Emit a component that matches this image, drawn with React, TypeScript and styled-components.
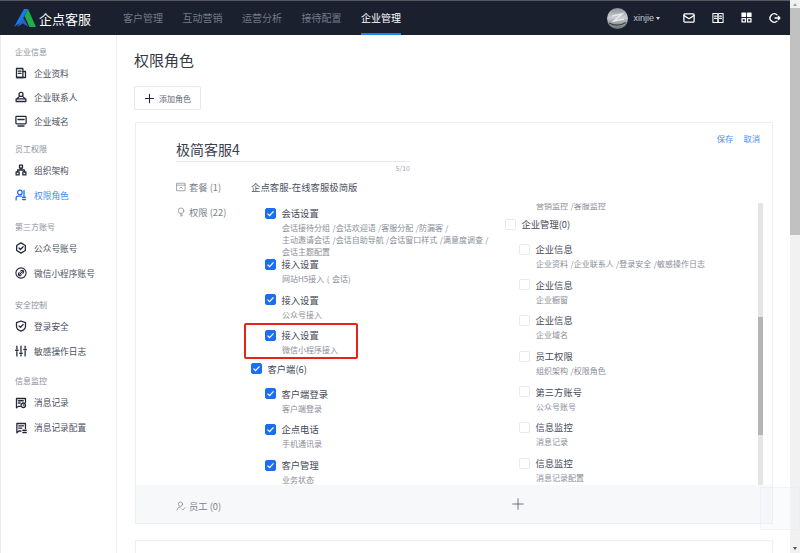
import React from "react";
import styled, { createGlobalStyle } from "styled-components";

const GlobalStyle = createGlobalStyle`
  html, body {
    margin: 0;
    padding: 0;
    height: 100%;
    overflow: hidden;
    background: #fff;
  }
  * {
    box-sizing: border-box;
  }
`;

const FONT = `"Noto Sans CJK SC", "Liberation Sans", sans-serif`;
const BLUE = "#1a6ef0";

const Page = styled.div`
  position: relative;
  width: 800px;
  height: 553px;
  overflow: hidden;
  font-family: ${FONT};
  color: #333a47;
  display: flex;
  flex-direction: column;
`;

const Header = styled.header`
  height: 35px;
  flex: none;
  background: #1a202e;
  border-top: 1px solid #55585f;
  margin-right: 10px;
  display: flex;
  align-items: center;
`;

const Brand = styled.div`
  width: 123px;
  padding-left: 14px;
  display: flex;
  align-items: center;
  gap: 3px;
  color: #fff;
  font-size: 13px;
  flex: none;
`;

const Nav = styled.nav`
  display: flex;
  gap: 19.5px;
  height: 100%;
`;

const NavItem = styled.a<{ $active?: boolean }>`
  width: 40px;
  font-size: 10px;
  line-height: 33px;
  white-space: nowrap;
  color: ${(p) => (p.$active ? "#fff" : "#737a88")};
  border-bottom: 2px solid ${(p) => (p.$active ? "#1f7ff0" : "transparent")};
`;

const HeaderRight = styled.div`
  margin-left: auto;
  display: flex;
  align-items: center;
  color: #fff;
`;

const User = styled.div`
  display: flex;
  align-items: center;
  gap: 5px;
  font-family: "Liberation Sans", sans-serif;
  font-size: 9px;
  color: #c3c7d0;
  margin-right: 23px;
`;

const Caret = styled.span`
  display: inline-block;
  margin-left: 2px;
  border: 2.5px solid transparent;
  border-top: 3px solid #d5d8de;
  border-bottom: 0;
  vertical-align: 1px;
`;

const HeaderIcons = styled.div`
  display: flex;
  gap: 17px;
  margin-right: 9px;
`;

const Body = styled.div`
  flex: 1;
  min-height: 0;
  display: flex;
`;

const Sidebar = styled.aside`
  width: 117px;
  flex: none;
  border-left: 1px solid #e9ebf0;
  border-right: 1px solid #eceef2;
  padding-top: 11px;
`;

const SideGroup = styled.div<{ $gap: number; $pitch: number }>`
  margin-bottom: ${(p) => p.$gap}px;
  a {
    height: ${(p) => p.$pitch}px;
  }
`;

const GroupTitle = styled.div`
  font-size: 8px;
  line-height: 11px;
  color: #8b909a;
  padding-left: 14px;
  margin-bottom: 4px;
`;

const SideItem = styled.a<{ $active?: boolean }>`
  display: flex;
  align-items: center;
  gap: 7px;
  padding-left: 14px;
  font-size: 8.7px;
  white-space: nowrap;
  color: ${(p) => (p.$active ? "#3f8cf3" : "#4b5160")};
  svg {
    color: ${(p) => (p.$active ? BLUE : "#23283a")};
    flex: none;
  }
`;

const Main = styled.main`
  flex: 1;
  min-width: 0;
  padding: 15px 17px 0 17px;
  overflow: hidden;
`;

const PageTitle = styled.h1`
  margin: 0;
  font-weight: 400;
  font-size: 15px;
  line-height: 20px;
  color: #343a46;
`;

const AddButton = styled.button`
  margin-top: 16px;
  width: 67px;
  height: 24px;
  border: 1px solid #e6e8ee;
  border-radius: 2px;
  background: #fff;
  display: flex;
  align-items: center;
  gap: 4px;
  padding: 0 0 0 9px;
  font-family: ${FONT};
  font-size: 8px;
  color: #5c6270;
  svg {
    color: #23283a;
  }
`;

const Card = styled.section`
  margin-top: 12px;
  width: 638px;
  height: 402px;
  margin-left: 1px;
  border: 1px solid #eceef2;
  position: relative;
  display: flex;
  flex-direction: column;
`;

const CardActions = styled.div`
  position: absolute;
  top: 9px;
  right: 12px;
  display: flex;
  gap: 10px;
  font-size: 8.3px;
  color: #4b8ff2;
`;

const NameBlock = styled.div`
  margin: 15px 0 0 40px;
  width: 234px;
`;

const NameInput = styled.div`
  font-size: 14px;
  line-height: 22px;
  height: 24px;
  border-bottom: 1px solid #e4e6f0;
  color: #3a404c;
`;

const Counter = styled.div`
  margin-top: 1px;
  font-size: 7px;
  line-height: 10px;
  text-align: right;
  color: #a3a7b0;
`;

const InfoRow = styled.div`
  display: flex;
  align-items: center;
  height: 16px;
  margin: 6px 0 0 40px;
`;

const InfoLabel = styled.div`
  width: 75px;
  flex: none;
  display: flex;
  align-items: center;
  gap: 3px;
  font-size: 9.3px;
  color: #7d828d;
`;

const InfoValue = styled.div`
  font-size: 9.4px;
  color: #4b5160;
`;

const PermBlock = styled.div`
  flex: 1;
  min-height: 0;
  display: flex;
  margin-top: 8px;
  overflow: hidden;
`;

const PermLabel = styled(InfoLabel)`
  margin: 2px 0 0 40px;
  width: 75px;
  height: 14px;
  align-self: flex-start;
`;

const Columns = styled.div`
  flex: 1;
  min-width: 0;
  display: flex;
  position: relative;
`;

const Column = styled.div<{ $width: number; $shift: number }>`
  width: ${(p) => p.$width}px;
  flex: none;
  margin-top: ${(p) => p.$shift}px;
`;

const Perm = styled.div<{ $child?: boolean; $gap?: number }>`
  position: relative;
  padding-left: ${(p) => (p.$child ? 14 : 0)}px;
  margin-bottom: ${(p) => p.$gap ?? 7.7}px;
`;

const PermHead = styled.div`
  display: flex;
  align-items: center;
  gap: 5.5px;
  height: 14px;
  font-size: 9.3px;
  color: #454b58;
`;

const Box = styled.span<{ $on?: boolean }>`
  width: 11px;
  height: 11px;
  flex: none;
  border-radius: 2px;
  display: flex;
  align-items: center;
  justify-content: center;
  background: ${(p) => (p.$on ? BLUE : "#fff")};
  border: 1px solid ${(p) => (p.$on ? BLUE : "#e8eaef")};
`;

const PermDesc = styled.div`
  margin-left: 17px;
  margin-top: 2px;
  font-size: 8px;
  line-height: 12px;
  word-spacing: 0.7px;
  white-space: pre-line;
  color: #8a8e98;
`;

const ScrolledDesc = styled(PermDesc)`
  margin: 0 0 5px 31px;
`;

const Highlight = styled.div`
  position: absolute;
  left: -7px;
  top: -5.4px;
  width: 114px;
  height: 36px;
  border: 2px solid #e8231c;
  border-radius: 2px;
  pointer-events: none;
`;

const InnerTrack = styled.div`
  position: absolute;
  top: 0;
  bottom: 0;
  right: 9px;
  width: 5px;
  background: #e5e5e5;
`;

const InnerThumb = styled.div`
  margin-top: 114px;
  height: 118px;
  background: #b4b4b4;
`;

const Footer = styled.div`
  height: 38px;
  flex: none;
  background: #f7f8fa;
  display: flex;
  align-items: center;
`;

const FooterLabel = styled(InfoLabel)`
  margin: 3px 0 0 40px;
  width: 336px;
`;

const NextCard = styled.div`
  margin: 16px 0 0 1px;
  width: 638px;
  height: 30px;
  border: 1px solid #eceef2;
`;

const PageScroll = styled.div`
  width: 10px;
  flex: none;
  background: #f1f1f1;
  display: flex;
  flex-direction: column;
  align-items: center;
  margin-top: -35px;
`;

const ScrollThumb = styled.div`
  width: 100%;
  height: 227px;
  margin-top: 2px;
  background: #c1c1c1;
`;

const Arrow = styled.span<{ $down?: boolean }>`
  margin-top: ${(p) => (p.$down ? "auto" : "3px")};
  margin-bottom: ${(p) => (p.$down ? "3px" : "0")};
  border: 2.5px solid transparent;
  ${(p) => (p.$down ? "border-top: 3px solid #505050; border-bottom: 0;" : "border-bottom: 3px solid #a3a3a3; border-top: 0;")}
`;

const Watermark = styled.div`
  position: absolute;
  left: 760px;
  top: 487px;
  width: 40px;
  height: 43px;
  background: rgba(240, 243, 247, 0.35);
  border: 1px solid rgba(225, 230, 238, 0.3);
`;

const Svg: React.FC<{ size?: number; children: React.ReactNode; sw?: number }> = ({
  size = 12,
  children,
  sw = 1.7,
}) => (
  <svg
    width={size}
    height={size}
    viewBox="0 0 16 16"
    fill="none"
    stroke="currentColor"
    strokeWidth={sw}
    strokeLinecap="round"
    strokeLinejoin="round"
  >
    {children}
  </svg>
);

const Logo = () => (
  <svg width="22" height="18" viewBox="0 0 22 18">
    <path d="M10 0 L14 0 L7 13 L0 18 Z" fill="#1679f0" />
    <path d="M14 0 L22 18 L15.5 18 L10.5 7 Z" fill="#1fae4b" />
    <path d="M9 8 L14.5 18 L9 14.5 L3 18 Z" fill="#2660c8" />
  </svg>
);

const Avatar = () => (
  <svg width="21" height="21" viewBox="0 0 21 21">
    <defs>
      <linearGradient id="av" x1="0" y1="0" x2="0" y2="1">
        <stop offset="0%" stopColor="#8b9094" />
        <stop offset="45%" stopColor="#c9cccf" />
        <stop offset="100%" stopColor="#6d7276" />
      </linearGradient>
    </defs>
    <circle cx="10.5" cy="10.5" r="10.5" fill="url(#av)" />
    <path d="M5 8 L15 6 L7 13 L17 11" fill="none" stroke="#e8eaec" strokeWidth="1.4" />
    <path d="M2 15 Q10 19.5 19 14.5" fill="none" stroke="#3f4347" strokeWidth="1.2" />
  </svg>
);

const MailIcon = () => (
  <Svg size={12} sw={1.7}>
    <rect x="1.2" y="2.5" width="13.6" height="11" rx="1.2" />
    <path d="M1.5 4.8 L8 9 L14.5 4.8" />
  </Svg>
);
const BookIcon = () => (
  <Svg size={12} sw={1.4}>
    <path d="M1.2 2 H6.5 Q8 2 8 3.5 V14 H1.2 Z" />
    <path d="M14.8 2 H9.5 Q8 2 8 3.5 V14 H14.8 Z" />
    <path d="M3.4 5.5 H5.8 M3.4 8.5 H5.8 M10.2 5.5 H12.6 M10.2 8.5 H12.6" />
  </Svg>
);
const GridIcon = () => (
  <Svg size={11} sw={1.8}>
    <rect x="1.5" y="1.5" width="5" height="5" fill="currentColor" />
    <rect x="9.5" y="1.5" width="5" height="5" fill="currentColor" />
    <rect x="1.5" y="9.5" width="5" height="5" />
    <rect x="9.5" y="9.5" width="5" height="5" />
  </Svg>
);
const ExitIcon = () => (
  <Svg size={12} sw={1.8}>
    <path d="M10.5 3.8 A5.5 5.5 0 1 0 10.5 12.2" />
    <path d="M8 8 H14.5 M12.5 5.8 L14.5 8 L12.5 10.2" />
  </Svg>
);

const icons: Record<string, React.ReactNode> = {
  doc: (
    <Svg>
      <rect x="2" y="2" width="8.5" height="12" />
      <path d="M10.5 6 H14 V14 H2 M4.5 5.5 H8 M4.5 8.5 H8" />
    </Svg>
  ),
  contact: (
    <Svg>
      <circle cx="8" cy="4.5" r="2.7" />
      <path d="M5.5 7.5 L3 10 M10.5 7.5 L13 10" />
      <rect x="1.5" y="10.5" width="13" height="3.5" />
    </Svg>
  ),
  domain: (
    <Svg>
      <rect x="1.2" y="1.8" width="13.6" height="10" rx="1" />
      <path d="M4 14.5 H12 M4 6 H12" strokeDasharray="1.6 1" strokeWidth="2" />
    </Svg>
  ),
  org: (
    <Svg>
      <rect x="6" y="1.5" width="4" height="4" />
      <rect x="1.5" y="10.5" width="4" height="4" />
      <rect x="10.5" y="10.5" width="4" height="4" />
      <path d="M8 5.5 V8 M3.5 10.5 V8 H12.5 V10.5" />
    </Svg>
  ),
  role: (
    <Svg>
      <circle cx="6.5" cy="4.5" r="3" />
      <path d="M1.5 14.5 V12 Q1.5 9.5 4 9.5 H8.5" />
      <path d="M12 2 V9 M10 11 H14 M10 14 H14" />
    </Svg>
  ),
  badge: (
    <Svg>
      <path d="M8 1.2 L13.8 4.6 V11.4 L8 14.8 L2.2 11.4 V4.6 Z" />
      <path d="M5.3 8 L7.3 10 L10.8 6.3" />
    </Svg>
  ),
  link: (
    <Svg sw={1.5}>
      <circle cx="8" cy="8" r="6.8" />
      <path d="M6.2 9.8 L9.8 6.2" />
      <path d="M7.5 5.5 L8.7 4.6 Q10 4 11 5 Q12 6 11.2 7.4 L10.4 8.4 M8.5 10.5 L7.3 11.4 Q6 12 5 11 Q4 10 4.8 8.6 L5.6 7.6" />
    </Svg>
  ),
  shield: (
    <Svg>
      <path d="M8 1.3 L14 3.5 V8.5 Q14 12.5 8 14.8 Q2 12.5 2 8.5 V3.5 Z" />
      <path d="M5.3 7.8 L7.3 9.8 L10.8 6" />
    </Svg>
  ),
  sliders: (
    <Svg>
      <path d="M2.5 1.5 V5 M2.5 9 V14.5 M8 1.5 V9 M8 13 V14.5 M13.5 1.5 V4 M13.5 8 V14.5" />
      <path d="M0.8 7 H4.2 M6.3 11 H9.7 M11.8 6 H15.2" />
    </Svg>
  ),
  record: (
    <Svg>
      <path d="M7 12.5 H4.5 L2 14.5 V2 H14 V7" />
      <path d="M4.5 5 H11 M4.5 8 H7" />
      <circle cx="11" cy="11" r="3" />
      <path d="M11 9.7 V11.2 H12.2" strokeWidth="1" />
    </Svg>
  ),
  config: (
    <Svg>
      <path d="M8 12 H5 L2.5 14.5 V2 H14 V8.5" />
      <path d="M5 5.2 H11.5 M5 8.2 H9 M10.5 11 H15 M10.5 14 H15" />
    </Svg>
  ),
};

const sideGroups = [
  {
    title: "企业信息",
    gap: 9.5,
    pitch: 24,
    items: [
      { icon: "doc", label: "企业资料" },
      { icon: "contact", label: "企业联系人" },
      { icon: "domain", label: "企业域名" },
    ],
  },
  {
    title: "员工权限",
    gap: 13,
    pitch: 25,
    items: [
      { icon: "org", label: "组织架构" },
      { icon: "role", label: "权限角色", active: true },
    ],
  },
  {
    title: "第三方账号",
    gap: 13,
    pitch: 25,
    items: [
      { icon: "badge", label: "公众号账号" },
      { icon: "link", label: "微信小程序账号" },
    ],
  },
  {
    title: "安全控制",
    gap: 11.5,
    pitch: 25,
    items: [
      { icon: "shield", label: "登录安全" },
      { icon: "sliders", label: "敏感操作日志" },
    ],
  },
  {
    title: "信息监控",
    gap: 0,
    pitch: 25,
    items: [
      { icon: "record", label: "消息记录" },
      { icon: "config", label: "消息记录配置" },
    ],
  },
];

const Check = () => (
  <svg width="9" height="9" viewBox="0 0 9 9" fill="none" stroke="#fff" strokeWidth="1.3">
    <path d="M1.5 4.6 L3.6 6.6 L7.5 2.4" />
  </svg>
);

interface PermData {
  label: string;
  desc?: string;
  parent?: boolean;
  marked?: boolean;
  gap?: number;
}

const leftPerms: PermData[] = [
  { label: "会话设置", desc: "会话接待分组 /会话欢迎语 /客服分配 /防漏客 /\n主动邀请会话 /会话自助导航 /会话窗口样式 /满意度调查 /\n会话主题配置", gap: -1 },
  { label: "接入设置", desc: "网站H5接入 ( 会话)" },
  { label: "接入设置", desc: "公众号接入" },
  { label: "接入设置", desc: "微信小程序接入", marked: true, gap: 5.3 },
  { label: "客户端(6)", parent: true, gap: 11 },
  { label: "客户端登录", desc: "客户端登录" },
  { label: "企点电话", desc: "手机通讯录" },
  { label: "客户管理", desc: "业务状态" },
];

const rightPerms: PermData[] = [
  { label: "企业管理(0)", parent: true, gap: 11 },
  { label: "企业信息", desc: "企业资料 /企业联系人 /登录安全 /敏感操作日志" },
  { label: "企业信息", desc: "企业橱窗" },
  { label: "企业信息", desc: "企业域名" },
  { label: "员工权限", desc: "组织架构 /权限角色" },
  { label: "第三方账号", desc: "公众号账号" },
  { label: "信息监控", desc: "消息记录" },
  { label: "信息监控", desc: "消息记录配置" },
];

const PermList: React.FC<{ items: PermData[]; on: boolean }> = ({ items, on }) => (
  <>
    {items.map((item, i) => (
      <Perm key={i} $child={!item.parent} $gap={item.gap}>
        <PermHead>
          <Box $on={on}>{on && <Check />}</Box>
          {item.label}
        </PermHead>
        {item.desc && <PermDesc>{item.desc}</PermDesc>}
        {item.marked && <Highlight />}
      </Perm>
    ))}
  </>
);

export default function App() {
  return (
    <Page>
      <GlobalStyle />
      <Header>
        <Brand>
          <Logo />
          企点客服
        </Brand>
        <Nav>
          <NavItem>客户管理</NavItem>
          <NavItem>互动营销</NavItem>
          <NavItem>运营分析</NavItem>
          <NavItem>接待配置</NavItem>
          <NavItem $active>企业管理</NavItem>
        </Nav>
        <HeaderRight>
          <User>
            <Avatar />
            <span>
              xinjie
              <Caret />
            </span>
          </User>
          <HeaderIcons>
            <MailIcon />
            <BookIcon />
            <GridIcon />
            <ExitIcon />
          </HeaderIcons>
        </HeaderRight>
      </Header>
      <Body>
        <Sidebar>
          {sideGroups.map((group) => (
            <SideGroup key={group.title} $gap={group.gap} $pitch={group.pitch}>
              <GroupTitle>{group.title}</GroupTitle>
              {group.items.map((item) => (
                <SideItem key={item.label} $active={item.active}>
                  {icons[item.icon]}
                  {item.label}
                </SideItem>
              ))}
            </SideGroup>
          ))}
        </Sidebar>
        <Main>
          <PageTitle>权限角色</PageTitle>
          <AddButton>
            <Svg size={11} sw={1.5}>
              <path d="M8 2 V14 M2 8 H14" />
            </Svg>
            添加角色
          </AddButton>
          <Card>
            <CardActions>
              <span>保存</span>
              <span>取消</span>
            </CardActions>
            <NameBlock>
              <NameInput>极简客服4</NameInput>
              <Counter>5/10</Counter>
            </NameBlock>
            <InfoRow>
              <InfoLabel>
                <Svg size={10} sw={1.1}>
                  <rect x="1.5" y="2" width="13" height="12" />
                  <path d="M1.5 5 H14.5 M6 10 L8 8 L10 10" />
                </Svg>
                套餐 (1)
              </InfoLabel>
              <InfoValue>企点客服-在线客服极简版</InfoValue>
            </InfoRow>
            <PermBlock>
              <PermLabel>
                <Svg size={10} sw={1.1}>
                  <circle cx="8" cy="6" r="4.5" />
                  <path d="M8 10.5 V15 M8 13 H10.5" />
                </Svg>
                权限 (22)
              </PermLabel>
              <Columns>
                <Column $width={254} $shift={3}>
                  <PermList items={leftPerms} on />
                </Column>
                <Column $width={250} $shift={-3}>
                  <ScrolledDesc>营销监控 /客服监控</ScrolledDesc>
                  <PermList items={rightPerms} on={false} />
                </Column>
                <InnerTrack>
                  <InnerThumb />
                </InnerTrack>
              </Columns>
            </PermBlock>
            <Footer>
              <FooterLabel>
                <Svg size={10} sw={1.1}>
                  <circle cx="7" cy="5" r="3.5" />
                  <path d="M1.5 14.5 Q2 9.5 7 9.5 M9 12.5 L11 14.5 L14.5 10.5" />
                </Svg>
                员工 (0)
              </FooterLabel>
              <Svg size={12} sw={0.9}>
                <path d="M8 1 V15 M1 8 H15" />
              </Svg>
            </Footer>
          </Card>
          <NextCard />
        </Main>
        <PageScroll>
          <Arrow />
          <ScrollThumb />
          <Arrow $down />
        </PageScroll>
      </Body>
      <Watermark />
    </Page>
  );
}
